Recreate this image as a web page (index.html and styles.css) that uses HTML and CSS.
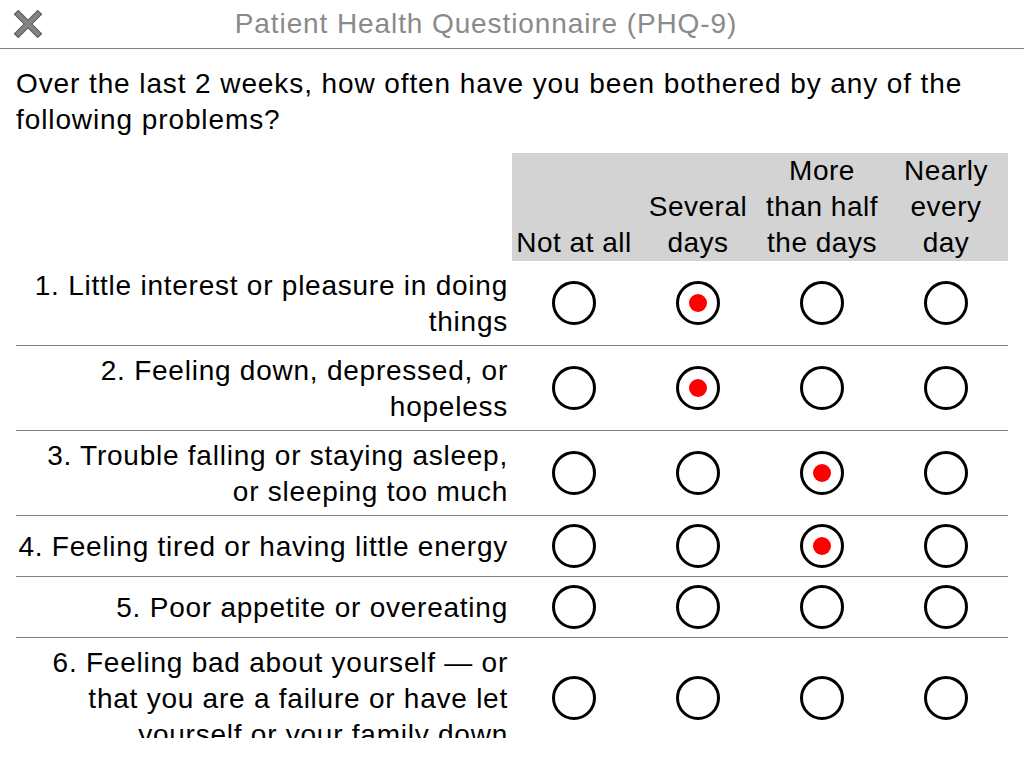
FILE: index.html
```html
<!DOCTYPE html>
<html>
<head>
<meta charset="utf-8">
<link rel="stylesheet" href="styles.css">
</head>
<body>
<div class="app">
  <header class="topbar">
    <button class="close" aria-label="Close">
      <svg width="30" height="30" viewBox="0 0 30 30">
        <path d="M3 3 L27 27 M27 3 L3 27" stroke="#555" stroke-width="6.5" fill="none"/>
        <path d="M3.8 3.8 L26.2 26.2 M26.2 3.8 L3.8 26.2" stroke="#838383" stroke-width="4.5" fill="none"/>
      </svg>
    </button>
    <h1 class="title">Patient Health Questionnaire (PHQ-9)</h1>
  </header>
  <main class="scroll">
    <p class="intro">Over the last 2 weeks, how often have you been bothered by any of the following problems?</p>
    <table class="grid">
      <thead>
        <tr>
          <th class="blank"></th>
          <th class="opt">Not at all</th>
          <th class="opt">Several<br>days</th>
          <th class="opt">More<br>than half<br>the days</th>
          <th class="opt">Nearly<br>every<br>day</th>
        </tr>
      </thead>
      <tbody>
        <tr>
          <td class="label">1. Little interest or pleasure in doing things</td>
          <td class="cell"><span class="radio"></span></td>
          <td class="cell"><span class="radio on"></span></td>
          <td class="cell"><span class="radio"></span></td>
          <td class="cell"><span class="radio"></span></td>
        </tr>
        <tr>
          <td class="label">2. Feeling down, depressed, or hopeless</td>
          <td class="cell"><span class="radio"></span></td>
          <td class="cell"><span class="radio on"></span></td>
          <td class="cell"><span class="radio"></span></td>
          <td class="cell"><span class="radio"></span></td>
        </tr>
        <tr>
          <td class="label">3. Trouble falling or staying asleep, or sleeping too much</td>
          <td class="cell"><span class="radio"></span></td>
          <td class="cell"><span class="radio"></span></td>
          <td class="cell"><span class="radio on"></span></td>
          <td class="cell"><span class="radio"></span></td>
        </tr>
        <tr>
          <td class="label">4. Feeling tired or having little energy</td>
          <td class="cell"><span class="radio"></span></td>
          <td class="cell"><span class="radio"></span></td>
          <td class="cell"><span class="radio on"></span></td>
          <td class="cell"><span class="radio"></span></td>
        </tr>
        <tr>
          <td class="label">5. Poor appetite or overeating</td>
          <td class="cell"><span class="radio"></span></td>
          <td class="cell"><span class="radio"></span></td>
          <td class="cell"><span class="radio"></span></td>
          <td class="cell"><span class="radio"></span></td>
        </tr>
        <tr>
          <td class="label">6. Feeling bad about yourself — or that you are a failure or have let yourself or your family down</td>
          <td class="cell"><span class="radio"></span></td>
          <td class="cell"><span class="radio"></span></td>
          <td class="cell"><span class="radio"></span></td>
          <td class="cell"><span class="radio"></span></td>
        </tr>
      </tbody>
    </table>
  </main>
</div>
</body>
</html>
```
FILE: styles.css
```css
* { box-sizing: border-box; }
html, body {
  margin: 0;
  padding: 0;
  background: #fff;
  font-family: "Liberation Sans", Arial, Helvetica, sans-serif;
  color: #000;
}
.app {
  width: 1024px;
  height: 768px;
  display: flex;
  flex-direction: column;
  overflow: hidden;
}
.topbar {
  height: 49px;
  flex: none;
  display: flex;
  align-items: center;
  border-bottom: 1px solid #808080;
  position: relative;
}
.close {
  position: absolute;
  left: 13px;
  top: 9px;
  width: 30px;
  height: 30px;
  padding: 0;
  border: 0;
  background: none;
}
.close svg { display: block; }
.title {
  flex: 1;
  margin: 0;
  padding-right: 52px;
  text-align: center;
  font-size: 28px;
  letter-spacing: 0.9px;
  font-weight: normal;
  color: #8a8a8a;
  line-height: 48px;
}
.scroll {
  height: 689px;
  flex: none;
  overflow: hidden;
  padding: 17px 16px 0 16px;
}
.intro {
  margin: 0 0 15px 0;
  font-size: 28px;
  letter-spacing: 0.9px;
  line-height: 36px;
}
.grid {
  width: 992px;
  border-collapse: collapse;
  table-layout: fixed;
  font-size: 28px;
  letter-spacing: 0.9px;
  line-height: 36px;
}
.blank { width: 496px; }
.opt {
  width: 124px;
  background: #d3d3d3;
  font-weight: normal;
  text-align: center;
  vertical-align: bottom;
  padding: 0;
  white-space: nowrap;
  letter-spacing: 0.5px;
}
tbody tr { border-bottom: 1px solid #808080; }
.label {
  text-align: right;
  padding: 7px 4px 5px 0;
  vertical-align: middle;
  letter-spacing: 0.76px;
}
.cell {
  text-align: center;
  vertical-align: middle;
  padding: 6px 0;
}
.radio {
  display: inline-block;
  vertical-align: middle;
  width: 44px;
  height: 44px;
  margin: 2px 0;
  border: 3px solid #000;
  border-radius: 50%;
  position: relative;
}
.radio.on::after {
  content: "";
  position: absolute;
  left: 50%;
  top: 50%;
  width: 18px;
  height: 18px;
  margin: -9px 0 0 -9px;
  border-radius: 50%;
  background: #ff0000;
}
```
